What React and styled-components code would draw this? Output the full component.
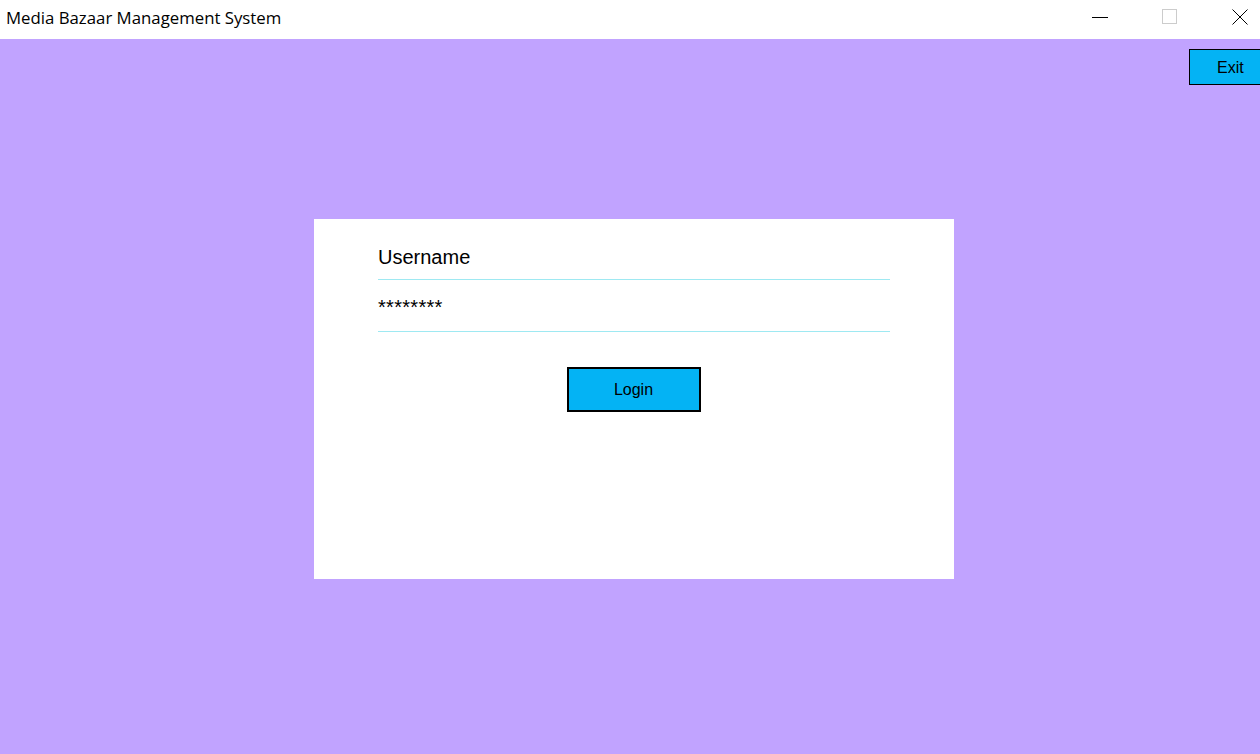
import React from 'react';
import styled, { createGlobalStyle } from 'styled-components';

const purple = '#c1a3ff';
const sky = '#04b3f4';
const rule = '#9ee9f2';

const Global = createGlobalStyle`
  html, body {
    margin: 0;
    padding: 0;
  }
  body {
    font-family: 'Liberation Sans', Arial, sans-serif;
    overflow: hidden;
  }
`;

const Window = styled.div`
  width: 1260px;
  height: 754px;
  display: flex;
  flex-direction: column;
  overflow: hidden;
`;

const TitleBar = styled.div`
  height: 39px;
  flex-shrink: 0;
  background: #fff;
  display: flex;
  align-items: center;
  justify-content: space-between;
`;

const Title = styled.span`
  padding-left: 6px;
  font-family: 'Open Sans', 'Noto Sans', sans-serif;
  font-size: 16.8px;
  color: #000;
  margin-top: -5px;
`;

const Controls = styled.div`
  display: flex;
  gap: 30px;
  height: 100%;
`;

const ControlButton = styled.div`
  width: 40px;
  height: 100%;
  display: flex;
  align-items: center;
  justify-content: center;
  padding-bottom: 6px;
  box-sizing: border-box;
`;

const Body = styled.div`
  flex: 1;
  background: ${purple};
  display: flex;
  flex-direction: column;
`;

const TopRow = styled.div`
  display: flex;
  justify-content: flex-end;
  padding-top: 10px;
`;

const ExitButton = styled.button`
  width: 74px;
  height: 36px;
  margin-right: -3px;
  background: ${sky};
  border: 1px solid #000;
  font-family: 'Liberation Sans', Arial, sans-serif;
  font-size: 16px;
  color: #000;
  padding: 2px 0 0 7px;
  text-align: left;
  text-indent: 20px;
`;

const Card = styled.div`
  margin: 134px 0 0 314px;
  width: 640px;
  height: 360px;
  background: #fff;
  box-sizing: border-box;
  padding: 27px 64px 0;
  display: flex;
  flex-direction: column;
`;

const Field = styled.div`
  width: 512px;
  height: ${({ h }) => h}px;
  border-bottom: 1px solid ${rule};
  display: flex;
  align-items: flex-start;
  font-size: 20px;
  color: #000;
`;

const Stars = styled.span`
  margin-top: 16px;
  font-size: 20px;
  letter-spacing: 0.3px;
`;

const ButtonRow = styled.div`
  display: flex;
  justify-content: center;
  padding-top: 35px;
  padding-right: 1px;
`;

const LoginButton = styled.button`
  width: 134px;
  height: 45px;
  background: ${sky};
  border: 2px solid #000;
  font-family: 'Liberation Sans', Arial, sans-serif;
  font-size: 16px;
  color: #000;
  padding: 0;
`;

export default function App() {
  return (
    <Window>
      <Global />
      <TitleBar>
        <Title>Media Bazaar Management System</Title>
        <Controls>
          <ControlButton>
            <svg width="16" height="16" viewBox="0 0 16 16">
              <line x1="0" y1="8.5" x2="16" y2="8.5" stroke="#000" strokeWidth="1" />
            </svg>
          </ControlButton>
          <ControlButton>
            <svg width="16" height="16" viewBox="0 0 16 16">
              <rect x="0.5" y="0.5" width="14" height="14" fill="none" stroke="#ccc" strokeWidth="1" />
            </svg>
          </ControlButton>
          <ControlButton>
            <svg width="16" height="16" viewBox="0 0 16 16">
              <path d="M0.5 0.5 L15.5 15.5 M15.5 0.5 L0.5 15.5" stroke="#000" strokeWidth="1" />
            </svg>
          </ControlButton>
        </Controls>
      </TitleBar>
      <Body>
        <TopRow>
          <ExitButton>Exit</ExitButton>
        </TopRow>
        <Card>
          <Field h={33}>Username</Field>
          <Field h={51}>
            <Stars>********</Stars>
          </Field>
          <ButtonRow>
            <LoginButton>Login</LoginButton>
          </ButtonRow>
        </Card>
      </Body>
    </Window>
  );
}
